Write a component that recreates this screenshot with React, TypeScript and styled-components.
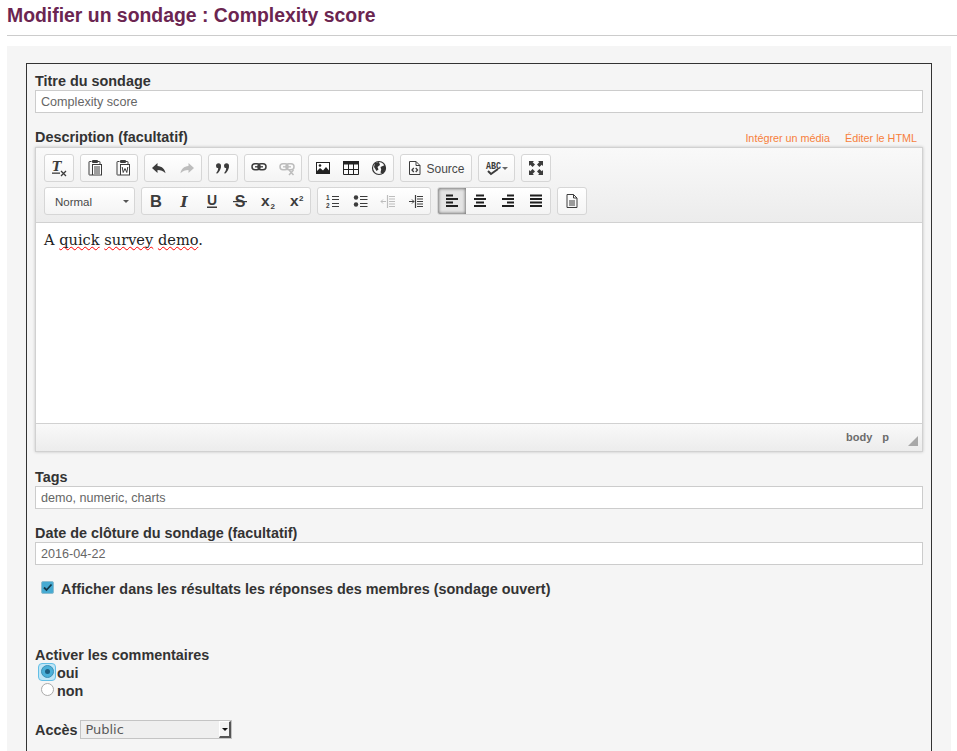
import React from "react";
import styled, { createGlobalStyle } from "styled-components";

const Global = createGlobalStyle`
  html, body { margin: 0; padding: 0; background: #fff; overflow: hidden; }
  body { font-family: "Liberation Sans", Arial, sans-serif; }
  #root { height: 751px; overflow: hidden; }
`;

const Page = styled.div`
  height: 751px;
  overflow: hidden;
  padding-left: 7px;
`;
const Title = styled.h1`
  margin: 0;
  box-sizing: border-box;
  padding-top: 4px;
  font-size: 19.4px;
  line-height: 22px;
  font-weight: 700;
  color: #6b2551;
  border-bottom: 1px solid #ccc;
  height: 36px;
`;
const Panel = styled.div`
  margin-top: 10px;
  width: 944px;
  background: #f5f5f5;
  padding: 17px 19px 0;
  box-sizing: border-box;
  height: 705px;
`;
const Box = styled.form`
  width: 906px;
  box-sizing: border-box;
  border: 1px solid #333;
  border-bottom: 0;
  padding: 8px 8px 0;
  height: 688px;
`;
const Label = styled.div`
  font-size: 14.4px;
  line-height: 18px;
  font-weight: 700;
  color: #333;
`;
const TextInput = styled.div`
  box-sizing: border-box;
  height: 23px;
  border: 1px solid #ccc;
  background: #fff;
  padding: 0 5px;
  font-size: 12.6px;
  line-height: 22px;
  color: #666;
  margin-bottom: ${(p: { $mb?: number }) => p.$mb ?? 0}px;
`;
const DescHead = styled.div`
  display: flex;
  justify-content: space-between;
  align-items: flex-end;
  margin-top: 15px;
  height: 18px;
`;
const Links = styled.div`
  display: flex;
  gap: 15px;
  padding-right: 6px;
  padding-bottom: 1px;
  font-size: 10.8px;
  line-height: 14px;
  color: #f77f3c;
`;
const Editor = styled.div`
  margin-top: 1px;
  box-sizing: border-box;
  height: 305px;
  border: 1px solid #d1d1d1;
  box-shadow: 0 0 3px rgba(0, 0, 0, 0.2);
  display: flex;
  flex-direction: column;
  margin-bottom: 16px;
`;
const Toolbar = styled.div`
  height: 75px;
  flex: none;
  box-sizing: border-box;
  border-bottom: 1px solid #d1d1d1;
  background: linear-gradient(#f9f9f9, #ececec);
  padding: 6px 8px 0;
  display: flex;
  flex-direction: column;
  gap: 5px;
`;
const Row = styled.div`
  display: flex;
  gap: 6px;
  height: 28px;
`;
const Group = styled.div`
  display: flex;
  box-sizing: border-box;
  height: 28px;
  border: 1px solid #d6d6d6;
  border-radius: 3px;
  background: linear-gradient(#fff, #f4f4f4);
`;
const Btn = styled.div<{ $w?: number; $active?: boolean }>`
  box-sizing: border-box;
  width: ${(p) => p.$w ?? 28}px;
  height: 26px;
  display: flex;
  align-items: center;
  justify-content: center;
  gap: 4px;
  ${(p) =>
    p.$active
      ? `background:#e4e4e4; box-shadow: inset 0 0 3px 1px rgba(0,0,0,.45); border-radius: 2px 0 0 2px;`
      : ""}
  svg { display: block; overflow: visible; }
`;
const SourceText = styled.span`
  font-size: 12px;
  color: #484848;
  padding-top: 1px;
  margin-left: -1px;
`;
const Combo = styled(Group)`
  width: 91px;
  align-items: center;
  justify-content: space-between;
  padding: 1px 5px 0 10px;
  font-size: 11.5px;
  color: #484848;
`;
const Caret = styled.span`
  width: 0;
  height: 0;
  border: 3px solid transparent;
  border-top-color: #555;
  border-bottom: 0;
`;
const Content = styled.div`
  flex: 1;
  background: #fff;
  padding: 7px 8px;
  font-family: "DejaVu Serif", serif;
  font-size: 14.6px;
  line-height: 20px;
  color: #222;
`;
const Misspelt = styled.span`
  text-decoration: underline wavy #f00;
  text-decoration-thickness: 1px;
  text-underline-offset: 1px;
  text-decoration-skip-ink: none;
`;
const Status = styled.div`
  height: 28px;
  flex: none;
  box-sizing: border-box;
  border-top: 1px solid #d1d1d1;
  background: linear-gradient(#f9f9f9, #ececec);
  display: flex;
  align-items: center;
  justify-content: flex-end;
  gap: 10px;
  padding-right: 33px;
  padding-bottom: 2px;
  font-size: 11px;
  font-weight: 700;
  color: #6b6b6b;
  position: relative;
`;
const Resize = styled.svg`
  position: absolute;
  right: 3px;
  bottom: 4px;
`;
const CheckRow = styled.div`
  display: flex;
  align-items: center;
  gap: 7px;
  padding-left: 6px;
  margin-top: 15px;
  height: 18px;
  font-size: 14.4px;
  font-weight: 700;
  color: #333;
`;
const CheckBox = styled.span`
  width: 13px;
  height: 13px;
  box-sizing: border-box;
  margin-top: -3px;
  background: #46aad2;
  border: 1px solid #8fbdcf;
  border-radius: 2px;
  display: flex;
  align-items: center;
  justify-content: center;
`;
const CommentLabel = styled(Label)`
  margin-top: 48px;
`;
const RadioRow = styled.div`
  display: flex;
  align-items: center;
  height: 18px;
  font-size: 14.4px;
  font-weight: 700;
  color: #333;
`;
const RadioWrap = styled.span<{ $on?: boolean }>`
  width: 18px;
  height: 18px;
  box-sizing: border-box;
  margin-left: 3px;
  margin-right: 1px;
  margin-top: -3px;
  border-radius: 4px;
  display: flex;
  align-items: center;
  justify-content: center;
  ${(p) => (p.$on ? "background:#bfe6f7; border:1px solid #63bfe6;" : "")}
`;
const Radio = styled.span<{ $on?: boolean }>`
  width: 13px;
  height: 13px;
  box-sizing: border-box;
  border-radius: 50%;
  border: 1px solid ${(p) => (p.$on ? "#3b8fb5" : "#aaa")};
  background: ${(p) => (p.$on ? "#4ab0d9" : "#fff")};
  display: flex;
  align-items: center;
  justify-content: center;
  &::after {
    content: "";
    width: 5px;
    height: 5px;
    border-radius: 50%;
    background: ${(p) => (p.$on ? "#1d5f82" : "transparent")};
  }
`;
const AccessRow = styled.div`
  display: flex;
  align-items: center;
  gap: 3px;
  margin-top: 20px;
  height: 19px;
  font-size: 14.4px;
  font-weight: 700;
  color: #333;
`;
const SelectBox = styled.div`
  width: 152px;
  height: 19px;
  box-sizing: border-box;
  border: 1px solid #c4c4c4;
  background: #efefef;
  display: flex;
  align-items: center;
  justify-content: space-between;
  padding-left: 4px;
  font-family: "DejaVu Sans", sans-serif;
  font-size: 13px;
  font-weight: 400;
  color: #5a5a5a;
`;
const SelectArrow = styled.span`
  width: 12px;
  height: 17px;
  box-sizing: border-box;
  background: #f3f3f3;
  border-top: 1px solid #fff;
  border-left: 1px solid #fff;
  border-right: 2px solid #555;
  border-bottom: 2px solid #555;
  display: flex;
  align-items: center;
  justify-content: center;
  &::after {
    content: "";
    border: 3px solid transparent;
    border-top-color: #111;
    border-bottom: 0;
  }
`;

const D = "#3c3c3c";
const G = "#bdbdbd";
type IP = { c?: string; children: React.ReactNode };
const I = ({ c = D, children }: IP) => (
  <svg width="16" height="16" viewBox="0 0 16 16" fill={c} stroke="none">
    {children}
  </svg>
);
const Ln = ({ d, c = D, w = 1 }: { d: string; c?: string; w?: number }) => (
  <path d={d} fill="none" stroke={c} strokeWidth={w} />
);
const SANS = "Liberation Sans, sans-serif";
const SERIF = "DejaVu Serif, serif";

const Clear = () => (
  <I>
    <text x="1" y="11" fontFamily={SERIF} fontWeight="700" fontStyle="italic" fontSize="12.500" fill={D}>T</text>
    <rect x="1" y="12.500" width="8" height="1.300" />
    <Ln d="M10 11l5 5M15 11l-5 5" w={1.300} />
  </I>
);
const Clip = ({ children }: { children: React.ReactNode }) => (
  <I>
    <Ln d="M4.500 1.500H2.500Q2 1.500 2 2v12.500Q2 15 2.500 15H5M10.500 1.500h2q.5 0 .5.5v2" />
    <rect x="5" y="0" width="6" height="3" rx="1" />
    <rect x="5.500" y="4.500" width="9" height="10.500" fill="#fff" stroke={D} />
    {children}
  </I>
);
const Paste = () => (
  <Clip>
    <Ln d="M7 7h6M7 9h6M7 11h6M7 13h6" />
  </Clip>
);
const PasteWord = () => (
  <Clip>
    <Ln d="M7.200 7l1 5.500 1.800-4 1.800 4 1-5.500" />
  </Clip>
);
const Undo = () => (
  <I>
    <path d="M6.500 3L1 8 6.500 13V10c3.500 0 5.500 .6 8 3.300C14 9 11 6.300 6.500 6z" />
  </I>
);
const Redo = () => (
  <I c={G}>
    <path d="M9.500 3L15 8 9.500 13V10c-3.500 0-5.500 .6-8 3.300C2 9 5 6.300 9.500 6z" />
  </I>
);
const Comma = ({ x }: { x: number }) => (
  <>
    <circle cx={x} cy="5.800" r="2.500" />
    <path d={`M${x + 2.500} 5.800c0 3.500-1.500 6-4 8l-.8-.8c1.300-1.500 1.800-3 2-5z`} />
  </>
);
const Quote = () => (
  <I>
    <Comma x={3.500} />
    <Comma x={11.500} />
  </I>
);
const Chain = ({ c }: { c: string }) => (
  <>
    <rect x="1" y="3.800" width="8" height="6" rx="3" fill="none" stroke={c} strokeWidth="1.500" />
    <rect x="7" y="3.800" width="8" height="6" rx="3" fill="none" stroke={c} strokeWidth="1.500" />
    <Ln d="M4 6.800h8" c={c} w={1.300} />
  </>
);
const Link = () => (
  <I>
    <Chain c={D} />
  </I>
);
const Unlink = () => (
  <I c={G}>
    <Chain c={G} />
    <Ln d="M10 10l4.500 5M14.500 10L10 15" c={G} w={1.500} />
  </I>
);
const Image = () => (
  <I>
    <rect x="1.500" y="2.500" width="13" height="11" fill="#fff" stroke="#222" />
    <path d="M2 13.500V11l3-3 3 2.500 3-3.500 3 3.500v3z" fill="#222" />
    <circle cx="5" cy="5.500" r="1.300" fill="#222" />
  </I>
);
const Table = () => (
  <I>
    <rect x="0" y="1" width="16" height="3.500" fill="#222" />
    <Ln c="#222" d="M.5 1v13.500h15V1M.5 9.500h15M5.500 4v10.500M10.500 4v10.500" />
  </I>
);
const Globe = () => (
  <I>
    <circle cx="8" cy="8" r="6.500" fill="none" stroke="#333" strokeWidth="1.200" />
    <path fill="#333" d="M4 3L8 2 9 5 6.500 7l1 2.500-2 1.500L3 7zM9.500 7l4.500-2 .7 4-2.700 5-2.500-1.500 .7-3z" />
  </I>
);
const Source = () => (
  <I>
    <Ln d="M2.500 1.500h6.500l4 4v9h-10.500zM9 1.500V5.500h4" />
    <Ln d="M6.800 8L5 10l1.800 2M8.700 8l1.800 2-1.800 2" w={1.300} />
  </I>
);
const Spell = () => (
  <svg width="26" height="16" viewBox="0 0 26 16">
    <text x="2" y="9" fontFamily="Liberation Mono, monospace" fontSize="11" fontWeight="700" textLength="15" lengthAdjust="spacingAndGlyphs" fill={D}>
      ABC
    </text>
    <Ln d="M4 11l3 3 7-5" w={2} />
    <path d="M18 7h6l-3 3z" fill="#666" />
  </svg>
);
const Max = () => (
  <I>
    <path d="M1 1h5L4.700 2.300 7 4.600 4.600 7 2.300 4.700 1 6zM15 1v5l-1.300-1.300L11.400 7 9 4.600l2.300-2.300L10 1zM1 15v-5l1.300 1.300L4.600 9 7 11.400l-2.300 2.300L6 15zM15 15h-5l1.300-1.300L9 11.400 11.400 9l2.300 2.300L15 10z" />
  </I>
);
const Bold = () => (
  <I>
    <text x="8" y="14" textAnchor="middle" fontFamily={SANS} fontWeight="700" fontSize="16.500" fill={D}>B</text>
  </I>
);
const Italic = () => (
  <I>
    <text x="8" y="13.500" textAnchor="middle" fontFamily={SERIF} fontWeight="700" fontStyle="italic" fontSize="15" fill={D}>I</text>
  </I>
);
const Under = () => (
  <I>
    <text x="8" y="12" textAnchor="middle" fontFamily={SANS} fontWeight="700" fontSize="14" fill={D}>U</text>
    <rect x="3" y="13.500" width="10" height="1.500" />
  </I>
);
const Strike = () => (
  <I>
    <text x="8" y="14" textAnchor="middle" fontFamily={SANS} fontWeight="700" fontSize="16" fill={D}>S</text>
    <rect x="1" y="8" width="14" height="1.200" />
  </I>
);
const Script = ({ n, up }: { n: string; up?: boolean }) => (
  <I>
    <text x={up ? 2 : 1} y="13" fontFamily={SANS} fontWeight="700" fontSize="15.500" fill={D}>x</text>
    <text x={up ? 11 : 10.500} y={up ? 8 : 15.500} fontFamily={SANS} fontWeight="700" fontSize="8" fill={D}>{n}</text>
  </I>
);
const Numbered = () => (
  <I>
    <Ln d="M8 3.500h7M8 6.500h7M8 10.500h7M8 13.500h7" />
    <text x="2" y="7" fontFamily={SANS} fontSize="6.500" fontWeight="700" fill={D}>1</text>
    <text x="2" y="14.500" fontFamily={SANS} fontSize="6.500" fontWeight="700" fill={D}>2</text>
  </I>
);
const Bullets = () => (
  <I>
    <circle cx="4" cy="4.500" r="2.200" />
    <circle cx="4" cy="11.500" r="2.200" />
    <Ln d="M8 3.500h7.500M8 6.500h7.500M8 10.500h7.500M8 13.500h7.500" />
  </I>
);
const IndentBars = ({ c }: { c: string }) => (
  <>
    <Ln c={c} d="M9 3.500h6M9 6h6M9 8.500h6M9 11h6M9 13.500h6" />
    <Ln c={c} d="M7.500 2v13" w={1.200} />
  </>
);
const Outdent = () => (
  <I c={G}>
    <IndentBars c={G} />
    <Ln c={G} d="M1 8.500h5M3 6.500l-2 2 2 2" />
  </I>
);
const Indent = () => (
  <I>
    <IndentBars c={D} />
    <Ln d="M1 8.500h5M4 6.500l2 2-2 2" />
  </I>
);
const bars = (rows: [number, number][]) => (
  <I c="#1f1f1f">
    {rows.map(([x, w], i) => (
      <rect key={i} x={x} y={1.500 + i * 3.500} width={w} height={2} />
    ))}
  </I>
);
const AL = () => bars([[2, 7], [2, 12], [2, 7], [2, 12]]);
const AC = () => bars([[4, 8], [2, 12], [4, 8], [2, 12]]);
const AR = () => bars([[7, 7], [2, 12], [7, 7], [2, 12]]);
const AJ = () => bars([[2, 12], [2, 12], [2, 12], [2, 12]]);
const Doc = () => (
  <I>
    <Ln d="M3 1.500h6.500L13 5v9.500H3zM9.500 1.500V5H13" />
    <Ln d="M5 8h6M5 10h6M5 12h6" />
  </I>
);

export default function App() {
  return (
    <Page>
      <Global />
      <Title>Modifier un sondage : Complexity score</Title>
      <Panel>
        <Box>
          <Label>Titre du sondage</Label>
          <TextInput>Complexity score</TextInput>
          <DescHead>
            <Label>Description (facultatif)</Label>
            <Links>
              <span>Intégrer un média</span>
              <span>Éditer le HTML</span>
            </Links>
          </DescHead>
          <Editor>
            <Toolbar>
              <Row>
                <Group><Btn><Clear /></Btn></Group>
                <Group><Btn><Paste /></Btn><Btn><PasteWord /></Btn></Group>
                <Group><Btn><Undo /></Btn><Btn><Redo /></Btn></Group>
                <Group><Btn><Quote /></Btn></Group>
                <Group><Btn><Link /></Btn><Btn><Unlink /></Btn></Group>
                <Group><Btn><Image /></Btn><Btn><Table /></Btn><Btn><Globe /></Btn></Group>
                <Group><Btn $w={70}><Source /><SourceText>Source</SourceText></Btn></Group>
                <Group><Btn $w={35}><Spell /></Btn></Group>
                <Group><Btn><Max /></Btn></Group>
              </Row>
              <Row>
                <Combo>Normal<Caret /></Combo>
                <Group>
                  <Btn><Bold /></Btn>
                  <Btn><Italic /></Btn>
                  <Btn><Under /></Btn>
                  <Btn><Strike /></Btn>
                  <Btn><Script n="2" /></Btn>
                  <Btn><Script n="2" up /></Btn>
                </Group>
                <Group>
                  <Btn><Numbered /></Btn>
                  <Btn><Bullets /></Btn>
                  <Btn><Outdent /></Btn>
                  <Btn><Indent /></Btn>
                </Group>
                <Group>
                  <Btn $active><AL /></Btn>
                  <Btn><AC /></Btn>
                  <Btn><AR /></Btn>
                  <Btn><AJ /></Btn>
                </Group>
                <Group><Btn><Doc /></Btn></Group>
              </Row>
            </Toolbar>
            <Content>
              A <Misspelt>quick</Misspelt> <Misspelt>survey</Misspelt> <Misspelt>demo</Misspelt>.
            </Content>
            <Status>
              <span>body</span>
              <span>p</span>
              <Resize width="12" height="12" viewBox="0 0 12 12">
                <path d="M11 1v10H1z" fill="#a8a8a8" />
              </Resize>
            </Status>
          </Editor>
          <Label>Tags</Label>
          <TextInput $mb={15}>demo, numeric, charts</TextInput>
          <Label>Date de clôture du sondage (facultatif)</Label>
          <TextInput>2016-04-22</TextInput>
          <CheckRow>
            <CheckBox>
              <svg width="11" height="11" viewBox="0 0 11 11">
                <path d="M2 5.500l2.500 2.500L9.500 2.500" fill="none" stroke="#12384a" strokeWidth="1.800" />
              </svg>
            </CheckBox>
            Afficher dans les résultats les réponses des membres (sondage ouvert)
          </CheckRow>
          <CommentLabel>Activer les commentaires</CommentLabel>
          <RadioRow><RadioWrap $on><Radio $on /></RadioWrap>oui</RadioRow>
          <RadioRow><RadioWrap><Radio /></RadioWrap>non</RadioRow>
          <AccessRow>
            Accès
            <SelectBox>Public<SelectArrow /></SelectBox>
          </AccessRow>
        </Box>
      </Panel>
    </Page>
  );
}
